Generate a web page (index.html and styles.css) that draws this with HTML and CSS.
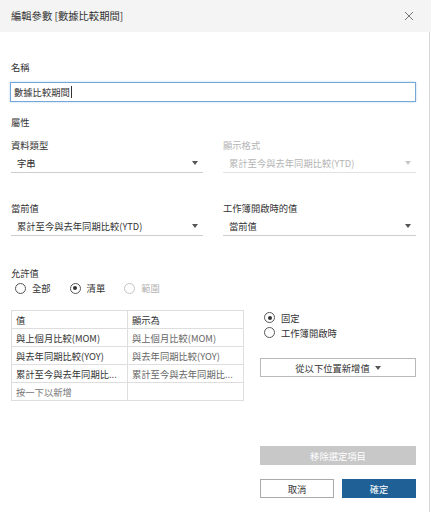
FILE: index.html
```html
<!DOCTYPE html>
<html lang="zh-Hant">
<head>
<meta charset="utf-8">
<link rel="stylesheet" href="styles.css">
</head>
<body>
<div class="dialog">
  <div class="header">
    <span class="title">編輯參數 [數據比較期間]</span>
    <svg class="close" width="10" height="10" viewBox="0 0 10 10"><path d="M1 1L9 9M9 1L1 9" stroke="#777" stroke-width="1" fill="none"/></svg>
  </div>
  <div class="content">
    <div class="label">名稱</div>
    <div class="input"><span>數據比較期間</span><span class="caret"></span></div>
    <div class="label section">屬性</div>

    <div class="grid">
      <div class="field">
        <div class="label">資料類型</div>
        <div class="select"><span>字串</span><span class="arrow"></span></div>
      </div>
      <div class="field disabled">
        <div class="label">顯示格式</div>
        <div class="select"><span>累計至今與去年同期比較(YTD)</span><span class="arrow"></span></div>
      </div>
      <div class="field">
        <div class="label">當前值</div>
        <div class="select"><span>累計至今與去年同期比較(YTD)</span><span class="arrow"></span></div>
      </div>
      <div class="field">
        <div class="label">工作簿開啟時的值</div>
        <div class="select"><span>當前值</span><span class="arrow"></span></div>
      </div>
    </div>

    <div class="label allowed">允許值</div>
    <div class="radios">
      <div class="radio"><span class="circle"></span>全部</div>
      <div class="radio"><span class="circle on"></span>清單</div>
      <div class="radio disabled"><span class="circle"></span>範圍</div>
    </div>

    <div class="list-area">
      <table class="values">
        <colgroup><col class="c1"><col class="c2"></colgroup>
        <tr><td>值</td><td>顯示為</td></tr>
        <tr><td>與上個月比較(MOM)</td><td class="muted">與上個月比較(MOM)</td></tr>
        <tr><td>與去年同期比較(YOY)</td><td class="muted">與去年同期比較(YOY)</td></tr>
        <tr><td>累計至今與去年同期比...</td><td class="muted">累計至今與去年同期比...</td></tr>
        <tr><td class="hint">按一下以新增</td><td></td></tr>
      </table>
      <div class="side">
        <div class="radio"><span class="circle on"></span>固定</div>
        <div class="radio"><span class="circle"></span>工作簿開啟時</div>
        <div class="btn add">從以下位置新增值 <span class="arrow dark"></span></div>
        <div class="spacer"></div>
        <div class="btn remove">移除選定項目</div>
        <div class="actions">
          <div class="btn cancel">取消</div>
          <div class="btn ok">確定</div>
        </div>
      </div>
    </div>
  </div>
</div>
</body>
</html>
```
FILE: styles.css
```css
* { box-sizing: border-box; }
html, body { margin: 0; padding: 0; background: #fff; }
body {
  font-family: "Noto Sans CJK TC", "Noto Sans", sans-serif;
  font-size: 9.3px;
  color: #333;
  line-height: 14px;
}
.dialog {
  width: 431px;
  height: 512px;
  display: flex;
  flex-direction: column;
}
.header {
  height: 32px;
  flex: none;
  background: #f4f4f4;
  display: flex;
  align-items: center;
  justify-content: space-between;
  padding: 0 17px 0 11px;
  font-size: 10.3px;
}
.close { display: block; }
.content {
  flex: 1;
  border-right: 1px solid #d6d6d6;
  margin-right: 1px;
  padding: 28px 13px 0 11px;
  display: flex;
  flex-direction: column;
}
.label { height: 14px; }
.input {
  margin: 8px 0 0 -1px;
  height: 20px;
  border: 1px solid #76a7d6;
  box-shadow: 0 0 2px rgba(80,150,220,0.45);
  display: flex;
  align-items: center;
  padding-left: 3px;
}
.caret { width: 1px; height: 12px; background: #333; margin-left: 1px; }
.section { margin-top: 13px; }
.grid {
  margin-top: 9px;
  display: grid;
  grid-template-columns: 192px 193px;
  column-gap: 20px;
  row-gap: 28px;
}
.select {
  margin-top: 1px;
  height: 20px;
  border-bottom: 1px solid #cfcfcf;
  display: flex;
  align-items: center;
  justify-content: space-between;
  padding: 0 5px 0 6px;
}
.arrow {
  width: 0; height: 0;
  border-left: 3px solid transparent;
  border-right: 3px solid transparent;
  border-top: 4px solid #555;
  display: inline-block;
}
.disabled { color: #b4b4b4; }
.disabled .arrow { border-top-color: #c8c8c8; }
.disabled .select { border-bottom-color: #e2e2e2; }
.allowed { margin-top: 30px; }
.radios {
  margin-top: 1px;
  display: flex;
  gap: 19px;
  padding-left: 4px;
}
.radio { display: flex; align-items: center; height: 14px; }
.circle {
  width: 11px; height: 11px;
  border: 1px solid #555;
  border-radius: 50%;
  margin-right: 6px;
  position: relative;
  flex: none;
}
.circle.on::after {
  content: "";
  position: absolute;
  left: 2.5px; top: 2.5px;
  width: 4px; height: 4px;
  border-radius: 50%;
  background: #333;
}
.radio.disabled .circle { border-color: #c4c4c4; }
.list-area {
  margin-top: 15px;
  display: flex;
  flex: 1;
  gap: 16px;
}
.values {
  border-collapse: collapse;
  table-layout: fixed;
  width: 233px;
  height: 91px;
  align-self: flex-start;
  flex: none;
}
.c1, .c2 { width: 116px; }
.values td {
  border: 1px solid #dedede;
  height: 18px;
  padding: 0 4px;
  white-space: nowrap;
  overflow: hidden;
}
.muted { color: #666; }
.hint { color: #777; }
.side {
  flex: 1;
  display: flex;
  flex-direction: column;
  padding-bottom: 14px;
}
.side .radio { padding-left: 4px; height: 15px; }
.btn {
  height: 19px;
  display: flex;
  align-items: center;
  justify-content: center;
  border: 1px solid #b9b9b9;
}
.add { margin-top: 18px; gap: 5px; }
.arrow.dark { border-top-color: #555; }
.spacer { flex: 1; }
.remove { background: #c8c8c8; border-color: #c8c8c8; color: #fff; }
.actions {
  margin-top: 14px;
  display: flex;
  justify-content: space-between;
}
.cancel { width: 74px; border-color: #aaa; }
.ok { width: 74px; background: #1f6196; border-color: #1f6196; color: #fff; }
```
